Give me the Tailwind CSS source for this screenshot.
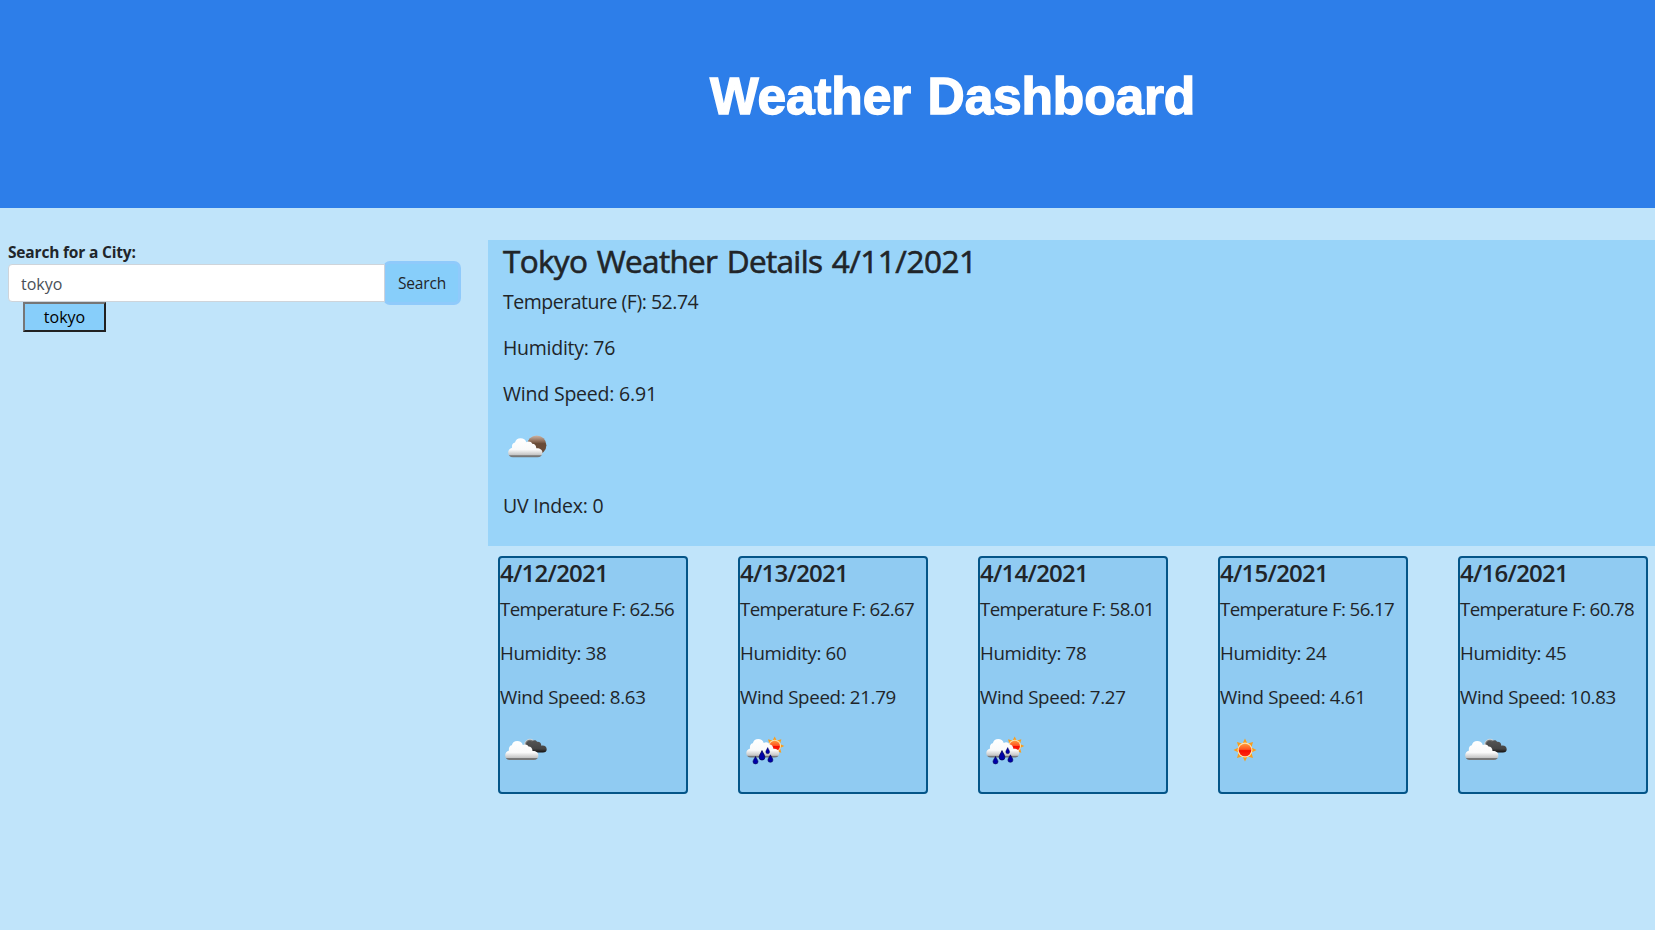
<!DOCTYPE html>
<html lang="en">
<head>
<meta charset="utf-8">
<title>Weather Dashboard</title>
<script src="https://cdn.jsdelivr.net/npm/@tailwindcss/browser@4"></script>
</head>
<body class="h-screen overflow-hidden bg-[#c0e4fa] font-['Open_Sans',sans-serif] text-base text-[#212529]">
<svg width="0" height="0" class="absolute" aria-hidden="true">
  <defs>
    <linearGradient id="white" x1="0" y1="0" x2="0" y2="1"><stop offset="0" stop-color="#fff"/><stop offset=".6" stop-color="#fafafa"/><stop offset=".88" stop-color="#c4c4c4"/><stop offset=".92" stop-color="#777"/><stop offset="1" stop-color="#777"/></linearGradient>
    <linearGradient id="dark" x1="0" y1="0" x2="0" y2="1"><stop offset="0" stop-color="#555"/><stop offset=".7" stop-color="#444"/><stop offset="1" stop-color="#111"/></linearGradient>
    <linearGradient id="moon" x1="0" y1="0" x2="0" y2="1"><stop offset="0" stop-color="#d0b5a5"/><stop offset=".3" stop-color="#8b6b57"/><stop offset=".42" stop-color="#684a36"/><stop offset="1" stop-color="#6b4e3b"/></linearGradient>
    <linearGradient id="red" x1="0" y1="0" x2="0" y2="1"><stop offset="0" stop-color="#ff9a3c"/><stop offset=".45" stop-color="#ff5522"/><stop offset=".55" stop-color="#f50d00"/><stop offset="1" stop-color="#ff2a10"/></linearGradient>
    <path id="cloud" d="M4.500 19C1.800 19 0 17 0 14.500C0 12 1.500 10.200 3.800 9.600C3.200 6.500 4.800 4.500 6.600 4.300C7.200 1.500 9.300 0 12 0C14.800 0 17 1.600 17.600 4C20 2.800 22.500 3.500 23.300 5.500C25.800 5.500 27.300 7.500 27.300 10C30.800 9.800 33.200 11.500 33.200 14.200C33.200 17 31.500 19 28.500 19Z"/>
    <g id="sun">
      <path fill="#f99d1c" d="M0-11.500L2.400-6.500L-2.400-6.500ZM8-8L6.500-2.800L2.800-6.500ZM11.500 0L6.500 2.400L6.500-2.400ZM8 8L2.800 6.500L6.500 2.800ZM0 11.500L-2.400 6.500L2.400 6.500ZM-8 8L-6.500 2.800L-2.800 6.500ZM-11.500 0L-6.500-2.400L-6.500 2.400ZM-8-8L-2.800-6.500L-6.500-2.800Z"/>
      <circle r="7.500" fill="#fde3ae"/><circle r="6.300" fill="url(#red)"/>
    </g>
    <path id="drop" fill="#0000a8" stroke="#000050" stroke-width=".6" d="M0-4.500C.7-2.500 2.500-.5 2.500 1.500A2.500 2.500 0 0 1-2.500 1.500C-2.500-.5-.7-2.500 0-4.500Z"/>
    <g id="broken">
      <circle cx="30" cy="17.500" r="5.300" fill="#777" stroke="#ddd" stroke-width=".8"/>
      <path fill="url(#dark)" d="M28 25.500L26 17C27 14 30 13 32 14.500C33.500 12.800 36 13 37 14.800C39.500 14.300 41.300 16 41.300 18.700C44.500 18 46.700 19.800 46.700 22.200C46.700 24.300 45.300 25.500 43 25.500Z"/>
      <use href="#cloud" x="5.200" y="14" fill="url(#white)"/>
    </g>
    <g id="rain">
      <use href="#sun" transform="translate(34.700 19) scale(.83)"/>
      <use href="#cloud" transform="translate(6.300 12) scale(.99 .98)" fill="url(#white)"/>
      <use href="#drop" transform="translate(15.500 33.400) scale(1 .88)"/>
      <use href="#drop" transform="translate(22 28.600) scale(1.150 1.120)"/>
      <use href="#drop" transform="translate(27.700 23.800) scale(.75 .72)"/>
      <use href="#drop" transform="translate(30.400 31.800) scale(1 .88)"/>
    </g>
    <g id="night"><circle cx="33.700" cy="20.200" r="9.700" fill="url(#moon)"/><use href="#cloud" transform="translate(5.200 13.200) scale(1.030 1)" fill="url(#white)"/></g>
  </defs>
</svg>

<header class="flex h-[208px] justify-center bg-[#2d7ee9] pt-16 pl-[250px]">
  <h1 class="h-16 font-['Liberation_Sans',sans-serif] text-[51.500px] leading-16 font-bold tracking-[-0.170px] whitespace-nowrap text-white [word-spacing:2.500px] [-webkit-text-stroke:1.400px_white]">Weather Dashboard</h1>
</header>

<div class="flex pt-8">
  <aside class="w-[488px] shrink-0 pl-2">
    <label for="city" class="block h-6 text-[15.500px] leading-6 font-bold tracking-[-0.180px]">Search for a City:</label>
    <div class="flex h-[38px]">
      <input id="city" value="tokyo" class="relative z-10 h-[38px] w-[377px] rounded-l border border-[#ced4da] bg-white px-3 pt-0.5 text-base text-[#495057]">
      <button class="ml-px h-[38px] w-[72px] rounded bg-[#87cefa] pt-0.5 text-[15.500px] tracking-[-0.150px] ring-3 ring-[#8fcafb]">Search</button>
    </div>
    <button class="ml-[15px] block h-[30px] w-[83px] border-2 border-t-[#767676] border-r-[#212121] border-b-[#212121] border-l-[#767676] bg-[#87cefa] leading-[26px] text-black">tokyo</button>
  </aside>

  <main class="grow">
    <section class="h-[306px] bg-[#99d4f9] pt-px pl-[15px] text-[19.500px] leading-[30px] whitespace-nowrap">
      <h2 class="mb-[7px] h-[38.400px] pt-px text-[31.500px] leading-[38.400px] font-medium tracking-[-0.680px] [word-spacing:2px] [-webkit-text-stroke:0.600px_#212529]">Tokyo Weather Details <span class="tracking-[-0.500px]">4/11/2021</span></h2>
      <p class="mt-2 mb-4 tracking-[-0.480px]">Temperature (F): 52.74</p>
      <p class="mb-4 tracking-[-0.270px]">Humidity: 76</p>
      <p class="mb-4 tracking-[-0.200px]">Wind Speed: 6.91</p>
      <svg class="mb-4 block size-[50px]"><use href="#night"/></svg>
      <p class="tracking-[-0.200px]">UV Index: 0</p>
    </section>
    <section id="forecast" class="flex gap-[50px] pt-2.5 pl-2.5"></section>
  </main>
</div>

<template id="day">
  <article class="h-[238px] w-[190px] shrink-0 rounded border-2 border-[#045588] bg-[#90cbf2] text-[18.700px] leading-7 whitespace-nowrap">
    <h3 class="mb-2 h-[28.800px] pt-px text-2xl leading-[28.800px] font-semibold tracking-[-0.750px]"></h3>
    <p class="mb-4 tracking-[-0.600px]"></p><p class="mb-4 tracking-[-0.360px]"></p><p class="mb-4 tracking-[-0.310px]"></p>
    <svg class="block size-[50px]"><use/></svg>
  </article>
</template>
<script>
const days = [
  ["4/12/2021", "62.56", "38", "8.63", "#broken"],
  ["4/13/2021", "62.67", "60", "21.79", "#rain"],
  ["4/14/2021", "58.01", "78", "7.27", "#rain"],
  ["4/15/2021", "56.17", "24", "4.61", "#clear"],
  ["4/16/2021", "60.78", "45", "10.83", "#broken"]
];
for (const [date, temp, hum, wind, icon] of days) {
  const card = document.getElementById("day").content.cloneNode(true);
  card.querySelector("h3").textContent = date;
  const p = card.querySelectorAll("p");
  p[0].textContent = "Temperature F: " + temp;
  p[1].textContent = "Humidity: " + hum;
  p[2].textContent = "Wind Speed: " + wind;
  const use = card.querySelector("use");
  use.setAttribute("href", icon === "#clear" ? "#sun" : icon);
  if (icon === "#clear") use.setAttribute("transform", "translate(25 23)");
  document.getElementById("forecast").append(card);
}
</script>
</body>
</html>
